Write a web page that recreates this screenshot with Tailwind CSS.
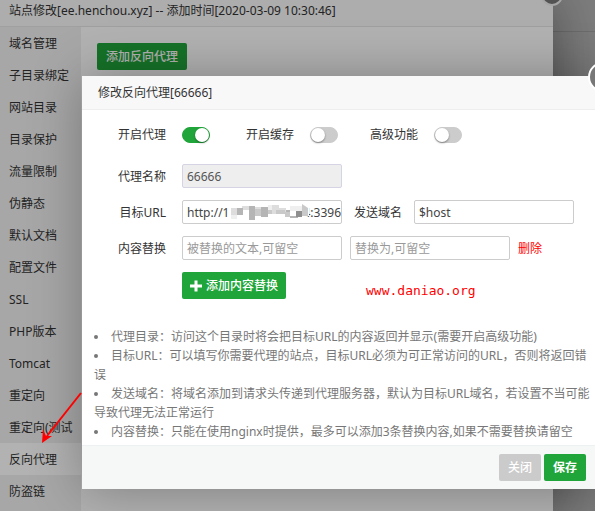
<!DOCTYPE html>
<html lang="zh-CN">

<head>
    <meta charset="UTF-8" />
    <meta name="viewport" content="width=device-width, initial-scale=1.0" />
    <title>站点修改 - 反向代理</title>
    <script src="https://cdn.jsdelivr.net/npm/@tailwindcss/browser@4"></script>
</head>

<body class="font-['Noto_Sans','Noto_Sans_CJK_SC',sans-serif] text-xs text-[#333]">
    <div class="relative min-h-screen overflow-hidden bg-[#b4b4b4]">
        <div class="h-8 border-b border-[#a0a0a0]"></div>

        <!-- site window -->
        <section class="absolute inset-y-0 left-0 right-[42px] flex flex-col bg-white shadow-[1px_1px_50px_rgba(0,0,0,0.4)]">
            <h2 class="h-[27px] shrink-0 border-b border-[#e6e6e6] bg-[#f8f8f8] px-[9px] leading-[21px]">站点修改[ee.henchou.xyz] -- 添加时间[2020-03-09 10:30:46]</h2>
            <button aria-label="关闭" class="absolute -right-[10px] -top-4 size-[22px] rounded-full border-2 border-[#eee] bg-[#777]"></button>
            <div class="flex grow">
                <nav class="flex w-[81px] shrink-0 flex-col whitespace-nowrap bg-[#f0f0f0] leading-[34px]">
                    <a href="#" class="h-8 px-[9px]">域名管理</a>
                    <a href="#" class="h-8 px-[9px]">子目录绑定</a>
                    <a href="#" class="h-8 px-[9px]">网站目录</a>
                    <a href="#" class="h-8 px-[9px]">目录保护</a>
                    <a href="#" class="h-8 px-[9px]">流量限制</a>
                    <a href="#" class="h-8 px-[9px]">伪静态</a>
                    <a href="#" class="h-8 px-[9px]">默认文档</a>
                    <a href="#" class="h-8 px-[9px]">配置文件</a>
                    <a href="#" class="h-8 px-[9px]">SSL</a>
                    <a href="#" class="h-8 px-[9px]">PHP版本</a>
                    <a href="#" class="h-8 px-[9px]">Tomcat</a>
                    <a href="#" class="h-8 px-[9px]">重定向</a>
                    <a href="#" class="h-8 px-[9px]">重定向(测试</a>
                    <a href="#" class="h-8 bg-white px-[9px]">反向代理</a>
                    <a href="#" class="h-8 px-[9px]">防盗链</a>
                </nav>
                <div class="p-4">
                    <button class="h-[27px] rounded-xs bg-[#20a53a] px-[9px] pt-px font-medium text-white">添加反向代理</button>
                </div>
            </div>
        </section>

        <div class="absolute inset-0 bg-black/30"></div>

        <!-- proxy dialog -->
        <section role="dialog" aria-labelledby="dialog-title" class="absolute -right-[7px] left-[82px] top-[76px] bg-white shadow-[1px_1px_50px_rgba(0,0,0,0.3)]">
            <h2 id="dialog-title" class="h-[34px] border-b border-[#eee] bg-[#f8f8f8] px-4 leading-[34px]">修改反向代理[66666]</h2>
            <button aria-label="关闭" class="absolute -right-4 -top-[14px] size-[30px] rounded-full border-2 border-white bg-[#777]"></button>

            <form class="flex flex-col gap-3 pt-[13px] pl-9">
                <div class="mb-[5px] flex h-6 items-center">
                    <label for="proxy-on" class="w-12 text-right">开启代理</label>
                    <input type="checkbox" id="proxy-on" checked class="ml-4 mr-9 h-4 w-7 appearance-none rounded-full border border-[#ccc] bg-[#ccc] before:block before:size-[14px] before:rounded-full before:bg-white before:shadow-[0_1px_2px_rgba(0,0,0,0.4)] checked:border-[#20a53a] checked:bg-[#20a53a] checked:before:translate-x-3" />
                    <label for="cache-on" class="w-12 text-right">开启缓存</label>
                    <input type="checkbox" id="cache-on" class="ml-4 mr-8 h-4 w-7 appearance-none rounded-full border border-[#ccc] bg-[#ccc] before:block before:size-[14px] before:rounded-full before:bg-white before:shadow-[0_1px_2px_rgba(0,0,0,0.4)] checked:border-[#20a53a] checked:bg-[#20a53a] checked:before:translate-x-3" />
                    <label for="advanced" class="w-12 text-right">高级功能</label>
                    <input type="checkbox" id="advanced" class="ml-4 h-4 w-7 appearance-none rounded-full border border-[#ccc] bg-[#ccc] before:block before:size-[14px] before:rounded-full before:bg-white before:shadow-[0_1px_2px_rgba(0,0,0,0.4)] checked:border-[#20a53a] checked:bg-[#20a53a] checked:before:translate-x-3" />
                </div>
                <div class="flex h-6 items-center">
                    <label for="name" class="w-12 pt-0.5 text-right">代理名称</label>
                    <input type="text" id="name" value="66666" readonly class="ml-4 h-6 w-40 rounded-xs border border-[#d4d4e4] bg-[#eee] px-1 text-[#555]" />
                </div>
                <div class="flex h-6 items-center">
                    <label for="target" class="w-12 whitespace-nowrap pt-0.5 text-right">目标URL</label>
                    <div class="relative ml-4">
                        <input type="text" id="target" value="http://1&emsp;&emsp;&emsp;&emsp;&emsp;&emsp;&thinsp;4:3396" class="block h-6 w-40 rounded-xs border border-[#ccc] bg-white pl-1 text-[#444]" />
                        <!-- pixelated part of the address -->
                        <svg class="absolute left-12 top-[3px]" width="80" height="18" viewBox="0 0 80 18" aria-hidden="true">
                            <path fill="#fff" d="M0 0h75l4 5v8h-7v3H0z" />
                            <path fill="#ddd" d="M1 5h7v7H1zM12 3h7v4h-7zM25 4h7v8h-7zM42 2h7v9h-7zM49 5h7v6h-7z" />
                            <path fill="#b5b5b5" d="M7 5h6v7H7zM19 3h6v14h-6zM31 4h7v10h-7zM56 7h4v4h-4zM60 13h8v2h-8z" />
                            <path fill="#c9c9c9" d="M25 6h6v7h-6zM46 7h9v4h-9zM38 7h4v4h-4zM55 9h5v5h-5zM72 1l6 4v8h-6z" />
                            <path fill="#8f8f8f" d="M66 8h6v6h-6z" />
                            <path fill="#efefef" d="M1 12h6v4H1zM38 2h4v5h-4zM60 3h12v5H60z" />
                        </svg>
                    </div>
                    <label for="host" class="ml-3 w-12 pt-0.5">发送域名</label>
                    <input type="text" id="host" value="$host" class="ml-3 h-6 w-40 rounded-xs border border-[#ccc] px-1 text-[#444]" />
                </div>
                <div class="flex h-6 items-center">
                    <label for="replace-from" class="w-12 pt-0.5 text-right">内容替换</label>
                    <input type="text" id="replace-from" placeholder="被替换的文本,可留空" class="ml-4 h-6 w-40 rounded-xs border border-[#ccc] px-1 placeholder:text-[#999]" />
                    <input type="text" aria-label="替换为" placeholder="替换为,可留空" class="ml-2 h-6 w-40 rounded-xs border border-[#ccc] px-1 placeholder:text-[#999]" />
                    <a href="#" class="ml-2 pt-0.5 text-[#f00]">删除</a>
                </div>
                <div class="flex items-end">
                    <button type="button" class="ml-16 flex h-[27px] items-center gap-1 rounded-xs bg-[#20a53a] px-2 font-medium text-white">
                        <svg width="12" height="12" viewBox="0 0 12 12" fill="currentColor" aria-hidden="true">
                            <path d="M4.5 0.5h3v4H12v3H7.5v4h-3v-4H0v-3h4.5z" />
                        </svg>
                        添加内容替换
                    </button>
                    <span class="ml-20 font-['DejaVu_Sans_Mono',monospace] text-[13px] leading-4 text-[#f00]">www.daniao.org</span>
                </div>
            </form>

            <ul class="mt-7 mb-1 list-none px-3 leading-[19px] text-[#777]">
                <li class="before:mr-[13px] before:mb-0.5 before:inline-block before:size-1 before:rounded-full before:bg-[#777] before:align-middle">代理目录：访问这个目录时将会把目标URL的内容返回并显示(需要开启高级功能)</li>
                <li class="before:mr-[13px] before:mb-0.5 before:inline-block before:size-1 before:rounded-full before:bg-[#777] before:align-middle">目标URL：可以填写你需要代理的站点，目标URL必须为可正常访问的URL，否则将返回错误</li>
                <li class="before:mr-[13px] before:mb-0.5 before:inline-block before:size-1 before:rounded-full before:bg-[#777] before:align-middle">发送域名：将域名添加到请求头传递到代理服务器，默认为目标URL域名，若设置不当可能导致代理无法正常运行</li>
                <li class="before:mr-[13px] before:mb-0.5 before:inline-block before:size-1 before:rounded-full before:bg-[#777] before:align-middle">内容替换：只能在使用nginx时提供，最多可以添加3条替换内容,如果不需要替换请留空</li>
            </ul>

            <div class="flex justify-end gap-[3px] border-t border-[#edf1f2] bg-[#f6f8f8] py-2 pr-4">
                <button class="h-[27px] w-[42px] rounded-xs bg-[#cbcbcb] font-medium text-white">关闭</button>
                <button class="h-[27px] w-[42px] rounded-xs bg-[#20a53a] font-bold text-white">保存</button>
            </div>
        </section>

        <!-- arrow to the active menu item -->
        <svg class="pointer-events-none absolute left-10 top-[390px]" width="44" height="56" viewBox="0 0 44 56" aria-hidden="true">
            <path d="M41 3L7 46" stroke="#f00" stroke-width="2" />
            <path d="M2 53L3 39L6 46L12 46z" fill="#f00" />
        </svg>
    </div>
</body>

</html>
